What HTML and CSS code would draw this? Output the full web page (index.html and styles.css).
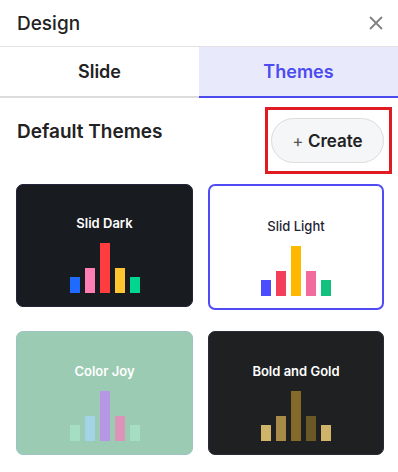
FILE: index.html
```html
<!DOCTYPE html>
<html>
  <head>
    <meta charset="utf-8">
    <meta name="viewport" content="width=device-width">
    <title>Design</title>
    <link rel="stylesheet" href="styles.css">
  </head>
  <body>
    <div class="panel">
      <!-- Panel header -->
      <div class="header">
        <span class="title">Design</span>
        <svg class="close" width="16" height="16" viewBox="0 0 16 16">
          <path d="M2 2 L14 14 M14 2 L2 14" stroke="#808080" stroke-width="1.8" fill="none" />
        </svg>
      </div>

      <div class="tabs">
        <div class="tab">Slide</div>
        <div class="tab active">Themes</div>
      </div>

      <div class="section-head">
        <span class="section-title">Default Themes</span>
        <div class="highlight">
          <button class="create"><span class="plus">+</span> Create</button>
        </div>
      </div>

      <div class="themes">
        <div class="card dark">
          <div class="name">Slid Dark</div>
          <div class="bars">
            <span class="bar low" style="background:#1f6bff"></span>
            <span class="bar mid" style="background:#ff7eb3"></span>
            <span class="bar high" style="background:#ff3d3f"></span>
            <span class="bar mid" style="background:#ffc531"></span>
            <span class="bar low" style="background:#00d68f"></span>
          </div>
        </div>

        <div class="card light">
          <div class="name">Slid Light</div>
          <div class="bars">
            <span class="bar low" style="background:#4b4bff"></span>
            <span class="bar mid" style="background:#f2405a"></span>
            <span class="bar high" style="background:#ffb800"></span>
            <span class="bar mid" style="background:#f26b9c"></span>
            <span class="bar low" style="background:#12c07f"></span>
          </div>
        </div>

        <div class="card joy">
          <div class="name">Color Joy</div>
          <div class="bars">
            <span class="bar low" style="background:#a5dec4"></span>
            <span class="bar mid" style="background:#a3d3e6"></span>
            <span class="bar high" style="background:#b796e3"></span>
            <span class="bar mid" style="background:#dd92b7"></span>
            <span class="bar low" style="background:#a5dec4"></span>
          </div>
        </div>

        <div class="card gold">
          <div class="name">Bold and Gold</div>
          <div class="bars">
            <span class="bar low" style="background:#cfb46a"></span>
            <span class="bar mid" style="background:#a88b46"></span>
            <span class="bar high" style="background:#846a2a"></span>
            <span class="bar mid" style="background:#6b5827"></span>
            <span class="bar low" style="background:#cfb46a"></span>
          </div>
        </div>
      </div>
    </div>
  </body>
</html>
```

FILE: styles.css
```css
body {
  margin: 0;
  background: #fff;
  font-family: Inter, "Noto Sans", sans-serif;
  color: #222;
}

.panel {
  width: 398px;
  height: 472px;
  overflow: hidden;
}

.header {
  height: 46px;
  display: flex;
  align-items: center;
  justify-content: space-between;
  padding: 0 14px 0 17px;
  border-bottom: 1px solid #e2e2e6;
}
.title {
  font-size: 19px;
  font-weight: 500;
  color: #222;
}
.close {
  display: block;
}

.tabs {
  display: flex;
  height: 51px;
}
.tab {
  flex: 1;
  display: flex;
  align-items: center;
  justify-content: center;
  font-size: 18px;
  font-weight: 600;
  color: #222;
  border-bottom: 2px solid #dcdcdc;
}
.tab.active {
  background: #e9e9fc;
  color: #4b4bf0;
  border-bottom-color: #4b4bf0;
}

.section-head {
  display: flex;
  align-items: center;
  justify-content: space-between;
  padding: 9px 6px 0 17px;
}
.section-title {
  font-size: 19px;
  font-weight: 600;
  color: #222;
  margin-top: -18px;
}
.highlight {
  border: 3px solid #e11b22;
  padding: 8px 5px 8px 3px;
}
.create {
  width: 113px;
  height: 45px;
  border: 1px solid #dcdcde;
  border-radius: 23px;
  background: #f5f6f8;
  font-family: inherit;
  font-size: 17px;
  font-weight: 600;
  color: #222;
}
.create .plus {
  font-weight: 400;
  color: #555;
}

.themes {
  display: grid;
  grid-template-columns: 177px 176px;
  column-gap: 15px;
  row-gap: 21px;
  padding: 10px 0 0 16px;
  align-items: start;
}

.card {
  box-sizing: border-box;
  height: 124px;
  border-radius: 7px;
  display: flex;
  flex-direction: column;
  align-items: center;
  justify-content: flex-end;
  padding-bottom: 13px;
}
.card .name {
  font-size: 13px;
  font-weight: 600;
  line-height: 16px;
  margin-bottom: 12px;
}
.dark {
  height: 123px;
  background: #181b20;
  border: 1px solid #23243a;
  color: #fff;
}
.light {
  height: 126px;
  background: #fff;
  border: 2px solid #4f4cf5;
  color: #1e2235;
  padding-bottom: 12px;
}
.light .name {
  font-weight: 500;
}
.joy {
  background: #9ccbb3;
  border: 1px solid #9cc3c8;
  color: #fff;
}
.gold {
  background: #1f2022;
  border: 1px solid #2a2b38;
  color: #fff;
}

.bars {
  display: flex;
  align-items: flex-end;
  gap: 5px;
  height: 50px;
}
.bar {
  width: 10px;
}
.bar.low { height: 16px; }
.bar.mid { height: 25px; }
.bar.high { height: 50px; }
```
